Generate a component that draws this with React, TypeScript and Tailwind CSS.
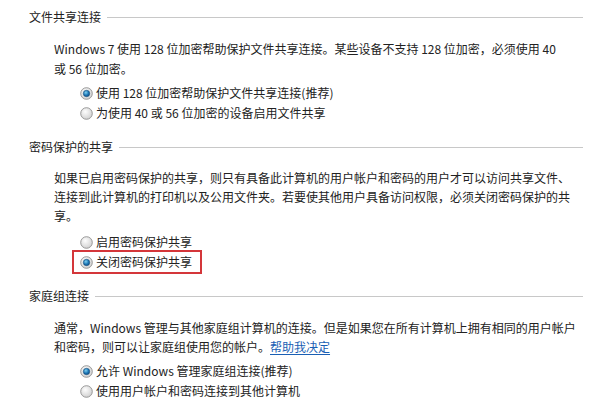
import React from "react";

const Radio = ({ checked }: { checked?: boolean }) => (
  <svg width="13" height="13" viewBox="0 0 13 13" className="shrink-0">
    <defs>
      <radialGradient id="rg-off" cx="40%" cy="35%" r="70%">
        <stop offset="0%" stopColor="#fdfdfd" />
        <stop offset="100%" stopColor="#cfcfcf" />
      </radialGradient>
      <radialGradient id="rg-on" cx="40%" cy="35%" r="70%">
        <stop offset="0%" stopColor="#7fd0f0" />
        <stop offset="60%" stopColor="#1a74b4" />
        <stop offset="100%" stopColor="#0e4f86" />
      </radialGradient>
    </defs>
    <circle cx="6.5" cy="6.5" r="5.8" fill="url(#rg-off)" stroke="#8f8f8f" strokeWidth="0.9" />
    {checked && <circle cx="6.5" cy="6.5" r="3.2" fill="url(#rg-on)" stroke="#1d4f7a" strokeWidth="0.6" />}
  </svg>
);

const Header = ({ title }: { title: string }) => (
  <div className="flex items-center h-5 pl-[29px] pr-[7px]">
    <span className="whitespace-nowrap">{title}</span>
    <div className="flex-1 ml-[6px] border-t border-[#c8c8c8]" />
  </div>
);

const Option = ({ label, checked }: { label: string; checked?: boolean }) => (
  <div className="flex items-center h-5 gap-[3px]">
    <Radio checked={checked} />
    <span className="whitespace-nowrap">{label}</span>
  </div>
);

export default function App() {
  return (
    <div
      className="w-[590px] h-[410px] bg-white text-[12px] text-[#222] overflow-hidden pt-[7px]"
      style={{ fontFamily: '"Microsoft YaHei", "Noto Sans CJK SC", sans-serif' }}
    >
      <Header title="文件共享连接" />
      <div className="pl-[54px] mt-[12px] leading-[20px] whitespace-nowrap">
        <div>Windows 7 使用 128 位加密帮助保护文件共享连接。某些设备不支持 128 位加密，必须使用 40</div>
        <div>或 56 位加密。</div>
      </div>
      <div className="pl-[80px] mt-[4px]">
        <Option checked label="使用 128 位加密帮助保护文件共享连接(推荐)" />
        <Option label="为使用 40 或 56 位加密的设备启用文件共享" />
      </div>

      <div className="mt-[14px]">
        <Header title="密码保护的共享" />
      </div>
      <div className="pl-[54px] mt-[11px] leading-[19px] whitespace-nowrap">
        <div>如果已启用密码保护的共享，则只有具备此计算机的用户帐户和密码的用户才可以访问共享文件、</div>
        <div>连接到此计算机的打印机以及公用文件夹。若要使其他用户具备访问权限，必须关闭密码保护的共</div>
        <div>享。</div>
      </div>
      <div className="pl-[72px] mt-[7px]">
        <div className="pl-[8px]">
          <Option label="启用密码保护共享" />
        </div>
        <div className="w-[130px] h-[24px] -mt-[2px] border-2 border-[#d4363a] pl-[6px] flex items-center">
          <Option checked label="关闭密码保护共享" />
        </div>
      </div>

      <div className="mt-[12px]">
        <Header title="家庭组连接" />
      </div>
      <div className="pl-[54px] mt-[12px] leading-[19px] whitespace-nowrap">
        <div>通常，Windows 管理与其他家庭组计算机的连接。但是如果您在所有计算机上拥有相同的用户帐户</div>
        <div>
          和密码，则可以让家庭组使用您的帐户。
          <span className="text-[#1a5fb4] underline underline-offset-2">帮助我决定</span>
        </div>
      </div>
      <div className="pl-[80px] mt-[5px]">
        <Option checked label="允许 Windows 管理家庭组连接(推荐)" />
        <Option label="使用用户帐户和密码连接到其他计算机" />
      </div>
    </div>
  );
}
